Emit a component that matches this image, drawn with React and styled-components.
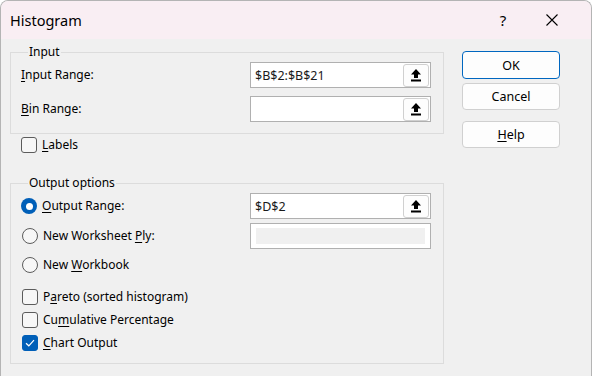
import React from "react"
import styled, { createGlobalStyle } from "styled-components"

const GlobalStyle = createGlobalStyle`
  html, body {
    margin: 0;
    padding: 0;
    background: #ffffff;
  }
  body {
    font-family: "Noto Sans", "Open Sans", sans-serif;
    font-size: 12px;
    color: #000;
  }
`

const Window = styled.div`
  width: 590px;
  height: 375px;
  border: 1px solid #b4b4b4;
  border-bottom: none;
  border-radius: 8px 8px 0 0;
  background: #f0f0f0;
  overflow: hidden;
  display: flex;
  flex-direction: column;
`

const TitleBar = styled.div`
  height: 38px;
  background: #f9eef3;
  display: flex;
  align-items: center;
  padding-left: 9px;
`

const Title = styled.span`
  font-size: 14.5px;
  flex: 1;
`

const TitleButton = styled.div`
  width: ${(p) => p.w}px;
  height: 38px;
  display: flex;
  align-items: center;
  justify-content: center;
  font-size: 15px;
`

const Body = styled.div`
  flex: 1;
  display: flex;
  padding: 6px 0 0 9px;
`

const MainColumn = styled.div`
  width: 434px;
  display: flex;
  flex-direction: column;
`

const Group = styled.fieldset`
  margin: ${(p) => p.mt || 0}px 0 0 0;
  border: 1px solid #dcdcdc;
  padding: 3px 12px ${(p) => p.bottom}px 10px;
  display: flex;
  flex-direction: column;
  gap: ${(p) => p.gap}px;
`

const Legend = styled.legend`
  padding: 0 1px;
  margin-left: 7px;
  line-height: 14px;
`

const FieldRow = styled.div`
  display: flex;
  align-items: center;
  justify-content: space-between;
  height: 26px;
`

const OptionRow = styled.label`
  display: flex;
  align-items: center;
  gap: 5px;
  height: ${(p) => p.h || 16}px;
  margin-top: ${(p) => p.mt || 0}px;
  padding-left: ${(p) => p.pl || 0}px;
`

const Label = styled.span`
  line-height: 16px;
`

const Key = styled.span`
  text-decoration: underline;
  text-underline-offset: 2px;
`

const TextBox = styled.div`
  box-sizing: border-box;
  width: 181px;
  height: 26px;
  border: 1px solid #b0b0b0;
  background: #fff;
  display: flex;
  align-items: center;
  padding: ${(p) => (p.disabled ? "4px 5px" : "0 1px 0 4px")};
`

const BoxText = styled.span`
  flex: 1;
  font-size: 12.5px;
  color: #1a1a1a;
`

const DisabledFill = styled.div`
  flex: 1;
  height: 100%;
  background: #f0f0f0;
`

const PickButton = styled.button`
  width: 26px;
  height: 23px;
  padding: 0;
  border: 1px solid #d0d0d0;
  border-radius: 3px;
  background: #fdfdfd;
  display: flex;
  align-items: center;
  justify-content: center;
`

const Checkbox = styled.span`
  width: 14px;
  height: 14px;
  border: 1px solid ${(p) => (p.checked ? "#005fb8" : "#5c5c5c")};
  border-radius: 3px;
  background: ${(p) => (p.checked ? "#005fb8" : "#f7f7f7")};
  display: flex;
  align-items: center;
  justify-content: center;
  flex-shrink: 0;
`

const Radio = styled.span`
  width: ${(p) => (p.checked ? 16 : 14)}px;
  height: ${(p) => (p.checked ? 16 : 14)}px;
  border: ${(p) => (p.checked ? "none" : "1px solid #5c5c5c")};
  border-radius: 50%;
  background: ${(p) => (p.checked ? "#005fb8" : "#f7f7f7")};
  display: flex;
  align-items: center;
  justify-content: center;
  flex-shrink: 0;
  &::after {
    content: "";
    display: ${(p) => (p.checked ? "block" : "none")};
    width: 7px;
    height: 7px;
    border-radius: 50%;
    background: #fff;
  }
`

const ButtonColumn = styled.div`
  display: flex;
  flex-direction: column;
  margin-left: 18px;
  padding-top: 6px;
`

const DialogButton = styled.button`
  width: 98px;
  height: ${(p) => p.h}px;
  margin-top: ${(p) => p.mt}px;
  border: 1px solid ${(p) => (p.primary ? "#0067c0" : "#d0d0d0")};
  border-radius: 4px;
  background: #fdfdfd;
  font-family: inherit;
  font-size: 12.5px;
  color: #000;
  padding: 0;
`

function PickIcon() {
  return (
    <svg width="12" height="14" viewBox="0 0 12 14">
      <polygon points="6,1 11,6.5 8,6.5 8,10 4,10 4,6.5 1,6.5" fill="#000" />
      <rect x="1" y="11.5" width="10" height="2" fill="#000" />
    </svg>
  )
}

function Field({ label, value }) {
  return (
    <FieldRow>
      <Label>{label}</Label>
      <TextBox>
        <BoxText>{value}</BoxText>
        <PickButton>
          <PickIcon />
        </PickButton>
      </TextBox>
    </FieldRow>
  )
}

function Check({ checked, children, mt, pl }) {
  return (
    <OptionRow mt={mt} pl={pl}>
      <Checkbox checked={checked}>
        {checked && (
          <svg width="10" height="8" viewBox="0 0 10 8">
            <path d="M1 4.2 L3.8 6.8 L9 1.2" stroke="#fff" strokeWidth="1.2" fill="none" />
          </svg>
        )}
      </Checkbox>
      <Label>{children}</Label>
    </OptionRow>
  )
}

export default function App() {
  return (
    <>
      <GlobalStyle />
      <Window>
        <TitleBar>
          <Title>Histogram</Title>
          <TitleButton w={48}>?</TitleButton>
          <TitleButton w={50}>
            <svg width="12" height="12" viewBox="0 0 12 12">
              <path d="M0.5 0.5 L11.5 11.5 M11.5 0.5 L0.5 11.5" stroke="#000" strokeWidth="1.1" />
            </svg>
          </TitleButton>
          <TitleButton w={14} />
        </TitleBar>
        <Body>
          <MainColumn>
            <Group gap={8} bottom={11}>
              <Legend>Input</Legend>
              <Field label={<><Key>I</Key>nput Range:</>} value="$B$2:$B$21" />
              <Field label={<><Key>B</Key>in Range:</>} value="" />
            </Group>
            <Check mt={3} pl={11}><Key>L</Key>abels</Check>
            <Group gap={4} bottom={12} mt={23}>
              <Legend>Output options</Legend>
              <FieldRow>
                <OptionRow>
                  <Radio checked />
                  <Label><Key>O</Key>utput Range:</Label>
                </OptionRow>
                <TextBox>
                  <BoxText>$D$2</BoxText>
                  <PickButton>
                    <PickIcon />
                  </PickButton>
                </TextBox>
              </FieldRow>
              <FieldRow>
                <OptionRow pl={1}>
                  <Radio />
                  <Label>New Worksheet <Key>P</Key>ly:</Label>
                </OptionRow>
                <TextBox disabled>
                  <DisabledFill />
                </TextBox>
              </FieldRow>
              <OptionRow pl={1} mt={4}>
                <Radio />
                <Label>New <Key>W</Key>orkbook</Label>
              </OptionRow>
              <Check mt={12} pl={1}>P<Key>a</Key>reto (sorted histogram)</Check>
              <Check mt={3} pl={1}>Cu<Key>m</Key>ulative Percentage</Check>
              <Check mt={3} pl={1} checked><Key>C</Key>hart Output</Check>
            </Group>
          </MainColumn>
          <ButtonColumn>
            <DialogButton primary h={28} mt={0}>OK</DialogButton>
            <DialogButton h={27} mt={4}>Cancel</DialogButton>
            <DialogButton h={27} mt={11}><Key>H</Key>elp</DialogButton>
          </ButtonColumn>
        </Body>
      </Window>
    </>
  )
}
